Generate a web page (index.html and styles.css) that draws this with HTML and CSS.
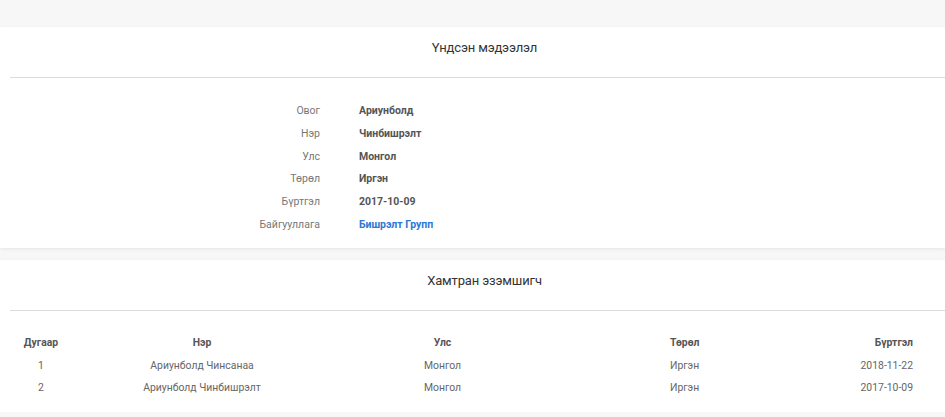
FILE: index.html
```html
<!DOCTYPE html>
<html>
<head>
<meta charset="utf-8">
<link rel="stylesheet" href="styles.css">
</head>
<body>
<div class="page">
  <section class="card card-info">
    <h2 class="card-title">Үндсэн мэдээлэл</h2>
    <div class="divider"></div>
    <dl class="info">
      <dt>Овог</dt><dd>Ариунболд</dd>
      <dt>Нэр</dt><dd>Чинбишрэлт</dd>
      <dt>Улс</dt><dd>Монгол</dd>
      <dt>Төрөл</dt><dd>Иргэн</dd>
      <dt>Бүртгэл</dt><dd>2017-10-09</dd>
      <dt>Байгууллага</dt><dd><a class="link" href="#">Бишрэлт Групп</a></dd>
    </dl>
  </section>
  <section class="card card-owners">
    <h2 class="card-title">Хамтран эзэмшигч</h2>
    <div class="divider"></div>
    <div class="owners">
      <div class="row head">
        <div class="c1">Дугаар</div><div class="c2">Нэр</div><div class="c3">Улс</div><div class="c4">Төрөл</div><div class="c5">Бүртгэл</div>
      </div>
      <div class="row">
        <div class="c1">1</div><div class="c2">Ариунболд Чинсанаа</div><div class="c3">Монгол</div><div class="c4">Иргэн</div><div class="c5">2018-11-22</div>
      </div>
      <div class="row">
        <div class="c1">2</div><div class="c2">Ариунболд Чинбишрэлт</div><div class="c3">Монгол</div><div class="c4">Иргэн</div><div class="c5">2017-10-09</div>
      </div>
    </div>
  </section>
</div>
</body>
</html>
```

FILE: styles.css
```css
html, body {
  margin: 0;
  padding: 0;
  background: #f7f7f7;
  font-family: Roboto, "Noto Sans", sans-serif;
}
.page {
  padding-top: 27px;
  display: flex;
  flex-direction: column;
  gap: 12px;
}
.card {
  background: #fff;
  box-shadow: 0 1px 3px rgba(0,0,0,0.08);
}
.card-title {
  margin: 0;
  font-size: 13px;
  font-weight: 400;
  color: #333;
  text-align: center;
  letter-spacing: -0.15px;
  line-height: 16px;
  padding: 13px 0 21px 24px;
}
.divider {
  height: 1px;
  background: #dcdcdc;
  margin-left: 10px;
}
.card-info {
  height: 221px;
}
.info {
  margin: 0;
  padding-top: 22px;
  display: grid;
  grid-template-columns: 320px 1fr;
  column-gap: 39px;
  row-gap: 0;
  font-size: 10.5px;
  line-height: 22.8px;
}
.info dt {
  text-align: right;
  color: #777;
}
.info dd {
  margin: 0;
  color: #555;
  font-weight: 700;
}
.link {
  color: #2d78d6;
  text-decoration: none;
}
.card-owners {
  height: 152px;
}
.owners {
  padding-top: 21px;
  font-size: 10.4px;
  color: #666;
}
.row {
  display: grid;
  grid-template-columns: 82px 240px 241px 200px 150px;
  line-height: 22.5px;
}
.row.head {
  font-weight: 700;
  color: #555;
}
.c1, .c2, .c3 { text-align: center; }
.c4 { padding-left: 107px; }
.c5 { text-align: right; }
```
